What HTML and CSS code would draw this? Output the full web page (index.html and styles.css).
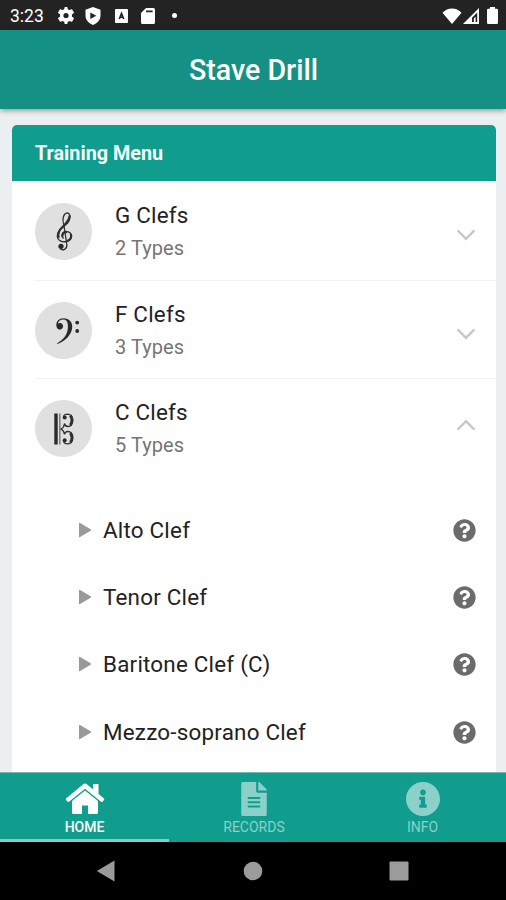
FILE: index.html
```
<!DOCTYPE html>
<html lang="en">
<head>
<meta charset="utf-8">
<title>Stave Drill</title>
<link rel="stylesheet" href="styles.css">
</head>
<body>
<svg class="defs" aria-hidden="true">
  <symbol id="help" viewBox="0 0 512 512"><path d="M504 256c0 136.997-111.043 248-248 248S8 392.997 8 256C8 119.083 119.043 8 256 8s248 111.083 248 248zM262.655 90c-54.497 0-89.255 22.957-116.549 63.758-3.536 5.286-2.353 12.415 2.715 16.258l34.699 26.31c5.205 3.947 12.621 3.008 16.665-2.122 17.864-22.658 30.113-35.797 57.303-35.797 20.429 0 45.698 13.148 45.698 32.958 0 14.976-12.363 22.667-32.534 33.976C247.128 238.528 216 254.941 216 296v4c0 6.627 5.373 12 12 12h56c6.627 0 12-5.373 12-12v-1.333c0-28.462 83.186-29.647 83.186-106.667 0-58.002-60.165-102-116.531-102zM256 338c-25.365 0-46 20.635-46 46 0 25.364 20.635 46 46 46s46-20.636 46-46c0-25.365-20.635-46-46-46z"/></symbol>
  <symbol id="play" viewBox="0 0 14 16"><path d="M1 1.6Q1 .4 2.1 1L12.6 7.2Q13.6 8 12.6 8.8L2.1 15Q1 15.6 1 14.4Z"/></symbol>
  <symbol id="chevron" viewBox="0 0 20 12"><path d="M1.6 1.4L10 9.8L18.4 1.4"/></symbol>
</svg>
<div class="status">
  <span class="clock">3:23</span>
  <svg class="st-gear" viewBox="0 0 24 24"><path fill-rule="evenodd" d="M19.6 13.3a8 8 0 0 0 0-2.6l2.7-2.1c.3-.2.3-.5.2-.8L20 3.400c-.2-.3-.5-.4-.8-.3L16 4.400a8 8 0 0 0-2.200-1.300L13.300.6c0-.3-.3-.6-.6-.6H9.900c-.4 0-.6.3-.7.6L8.800 3.100a8 8 0 0 0-2.200 1.300L3.400 3.100c-.3-.1-.6 0-.8.3L.1 7.800c-.2.3-.1.6.2.8L3 10.700a8 8 0 0 0 0 2.600L.3 15.400c-.3.2-.4.5-.2.8l2.500 4.400c.2.3.5.4.8.3l3.200-1.300a8 8 0 0 0 2.200 1.300l.4 2.500c.1.3.3.6.7.6h2.800c.3 0 .6-.3.6-.6l.5-2.500a8 8 0 0 0 2.200-1.300l3.200 1.300c.3.1.6 0 .8-.3l2.500-4.400c.1-.3.1-.6-.2-.8ZM11.300 8.300a3.700 3.700 0 1 1 0 7.400a3.700 3.700 0 0 1 0-7.400Z"/></svg>
  <svg class="st-shield" viewBox="0 0 16 18"><path fill-rule="evenodd" d="M8 0L15.500 2.800V8.500C15.500 13 12 16.500 8 18C4 16.500.5 13 .5 8.500V2.800ZM5.300 5.400V12L11.300 8.700Z"/></svg>
  <svg class="st-box" viewBox="0 0 13 14"><path d="M1 0H12Q13 0 13 1V13Q13 14 12 14H1Q0 14 0 13V1Q0 0 1 0Z"/><path class="dark" d="M4.300 10L6.500 4.500L8.700 10M5.400 8.300H7.600"/></svg>
  <svg class="st-card" viewBox="0 0 14 16"><path fill-rule="evenodd" d="M5 0H12.500Q14 0 14 1.500V14.500Q14 16 12.500 16H1.500Q0 16 0 14.500V5ZM5 2.500V4.300H11.600V2.500Z"/></svg>
  <span class="st-dot"></span>
  <span class="spacer"></span>
  <svg class="st-wifi" viewBox="0 0 20 16"><path d="M10 16L.5 4.800Q4.500 .5 10 .5T19.500 4.800Z"/></svg>
  <svg class="st-signal" viewBox="0 0 16 16"><path fill-rule="evenodd" d="M16 0V16H0ZM14.200 4.500L9 9.700V13.900H14.200Z"/><path d="M10.800 10.500L12.600 8.700V13.900H10.800Z"/></svg>
  <svg class="st-battery" viewBox="0 0 11 17"><path d="M3 0H8V1.800H9.800Q11 1.800 11 3V15.800Q11 17 9.800 17H1.200Q0 17 0 15.800V3Q0 1.800 1.200 1.800H3Z"/></svg>
</div>
<header class="appbar"><h1>Stave Drill</h1></header>
<main class="content">
  <section class="card">
    <h2 class="card-title">Training Menu</h2>
    <div class="group">
      <svg class="clef" viewBox="0 0 57 57"><circle cx="28.500" cy="28.500" r="28.500"/><path class="thin" d="M28.800 21.500C26.800 16 28.500 10.200 32.300 9.800C36 10.500 36 17.500 31 21.500C26 25.500 22.300 28.500 22.300 33C22.500 37.500 27 39.500 31.500 38.500C37.500 37 38 29.300 32 28.600C27.300 28.300 25.800 33 28.500 35.500"/><path class="thick" d="M34.700 12.500C34.500 16.500 31.500 20 28 23.500C23.500 27.500 22.200 31 23.800 34.800M35.700 31C37.200 34 35.500 37 32 38M27.600 33.500C26.500 30.500 29 28.800 32 29"/><path class="thin" d="M28.800 21.500L31.800 41.500C32.300 46.500 27.500 48 25 45.500"/><circle class="ink" cx="26" cy="43.300" r="2.600"/></svg>
      <div class="labels"><span class="name">G Clefs</span><span class="count">2 Types</span></div>
      <svg class="chevron"><use href="#chevron"/></svg>
    </div>
    <div class="group second">
      <svg class="clef" viewBox="0 0 57 57"><circle cx="28.500" cy="28.500" r="28.500"/><path class="ink" d="M21.500 24.500C20.500 19.500 24 16.300 28.700 16.300C34 16.300 37.400 19.800 37.200 25C37 33 30 39 22.500 42L22.200 41.300C28.500 37.500 32.500 33 32.900 25.500C33.200 20 31.500 17.400 28.300 17.400C25.500 17.400 23.300 19 22.900 21.500A3.300 3.300 0 1 1 21.500 24.500Z"/><circle class="ink" cx="42.200" cy="20.600" r="1.900"/><circle class="ink" cx="42.200" cy="29" r="1.900"/></svg>
      <div class="labels"><span class="name">F Clefs</span><span class="count">3 Types</span></div>
      <svg class="chevron"><use href="#chevron"/></svg>
    </div>
    <div class="group open">
      <svg class="clef" viewBox="0 0 57 57"><circle cx="28.500" cy="28.500" r="28.500"/><path class="ink" d="M19.300 13.500H22.700V44.500H19.300Z"/><path class="soft" d="M24 13.500H25.600V44.500H24Z"/><path class="thin" d="M28.500 17C28.500 14.800 30.500 14.100 33 14.100C39 14.500 39 26.500 33 26.500C30.500 26.500 29.800 25 29.500 23.500C29.200 26 28 28 26 29C28 30 29.200 31.500 29.500 34.500C29.800 32.500 30.500 31.500 33 31.500C39 31.500 39 43.500 33 43.900C30.500 43.900 28.500 43 28.500 40.500"/><path class="bowl" d="M35.300 15.500C37.600 18 37.600 22.500 35.300 25.200M35.300 32.900C37.600 35.500 37.600 39.800 35.300 42.500"/><circle class="ink" cx="29.700" cy="17.500" r="2"/><circle class="ink" cx="29.700" cy="40.300" r="2"/></svg>
      <div class="labels"><span class="name">C Clefs</span><span class="count">5 Types</span></div>
      <svg class="chevron up"><use href="#chevron"/></svg>
    </div>
    <ul class="items">
      <li><svg class="play"><use href="#play"/></svg><span>Alto Clef</span><svg class="help"><use href="#help"/></svg></li>
      <li><svg class="play"><use href="#play"/></svg><span>Tenor Clef</span><svg class="help"><use href="#help"/></svg></li>
      <li><svg class="play"><use href="#play"/></svg><span>Baritone Clef (C)</span><svg class="help"><use href="#help"/></svg></li>
      <li><svg class="play"><use href="#play"/></svg><span>Mezzo-soprano Clef</span><svg class="help"><use href="#help"/></svg></li>
    </ul>
  </section>
</main>
<nav class="tabs">
  <div class="tab active"><svg class="home" viewBox="0 0 40 34"><path d="M20 8.500L33 19V30.500Q33 32 31.500 32H23V23.500H17V32H8.500Q7 32 7 30.500V19Z"/><path d="M18.200 2.200Q20 .800 21.800 2.200L28 7.300V2H33.500V12L39 16.600Q39.500 17.200 39 17.900L37.300 19.700Q36.700 20.200 36 19.700L20 6.700L4 19.700Q3.300 20.200 2.700 19.700L1 17.900Q.5 17.200 1 16.600Z"/></svg><span>HOME</span></div>
  <div class="tab"><svg class="file" viewBox="0 0 384 512"><path d="M224 136V0H24C10.700 0 0 10.700 0 24v464c0 13.300 10.700 24 24 24h336c13.300 0 24-10.700 24-24V160H248c-13.200 0-24-10.800-24-24zm64 236c0 6.600-5.400 12-12 12H108c-6.600 0-12-5.400-12-12v-8c0-6.600 5.400-12 12-12h168c6.600 0 12 5.400 12 12v8zm0-64c0 6.600-5.400 12-12 12H108c-6.600 0-12-5.400-12-12v-8c0-6.600 5.400-12 12-12h168c6.600 0 12 5.400 12 12v8zm0-72v8c0 6.600-5.400 12-12 12H108c-6.600 0-12-5.400-12-12v-8c0-6.600 5.400-12 12-12h168c6.600 0 12 5.400 12 12zm96-114.100v6.100H256V0h6.100c6.400 0 12.500 2.500 17 7l97.900 98c4.500 4.500 7 10.600 7 16.900z"/></svg><span>RECORDS</span></div>
  <div class="tab"><svg class="info" viewBox="8 8 496 496"><path d="M256 8C119.043 8 8 119.083 8 256c0 136.997 111.043 248 248 248s248-111.003 248-248C504 119.083 392.957 8 256 8zm0 110c23.196 0 42 18.804 42 42s-18.804 42-42 42-42-18.804-42-42 18.804-42 42-42zm56 254c0 6.627-5.373 12-12 12h-88c-6.627 0-12-5.373-12-12v-24c0-6.627 5.373-12 12-12h12v-64h-12c-6.627 0-12-5.373-12-12v-24c0-6.627 5.373-12 12-12h64c6.627 0 12 5.373 12 12v100h12c6.627 0 12 5.373 12 12v24z"/></svg><span>INFO</span></div>
</nav>
<div class="sysnav">
  <svg viewBox="0 0 20 22"><path d="M18.500 .5V21.500L.8 11Z"/></svg>
  <svg viewBox="0 0 20 22"><circle cx="10" cy="11" r="9.300"/></svg>
  <svg viewBox="0 0 20 22"><rect x=".5" y="1.500" width="19" height="19" rx="1"/></svg>
</div>
</body>
</html>
```

FILE: styles.css
```
* { box-sizing: border-box; }
body {
  margin: 0;
  height: 900px;
  display: flex;
  flex-direction: column;
  overflow: hidden;
  background: #eceff1;
  font-family: Roboto, "Liberation Sans", sans-serif;
  white-space: nowrap;
}
svg { display: block; flex: none; }
.defs { position: absolute; width: 0; height: 0; }

.status {
  height: 30px;
  flex: none;
  display: flex;
  align-items: center;
  padding: 1px 8px 0 10px;
  background: #232323;
  color: #fff;
}
.status svg { fill: #fff; }
.clock { width: 48px; font-size: 17.5px; line-height: 28px; }
.st-gear { width: 17px; height: 17px; }
.st-shield { width: 16px; height: 18px; margin-left: 10px; }
.st-box { width: 13px; height: 14px; margin-left: 14px; }
.st-box .dark { fill: none; stroke: #232323; stroke-width: 1.6; }
.st-card { width: 14px; height: 16px; margin-left: 13px; }
.st-dot { width: 5px; height: 5px; border-radius: 50%; background: #fff; margin-left: 17px; }
.spacer { flex: 1; }
.st-wifi { width: 20px; height: 16px; }
.st-signal { width: 16px; height: 16px; margin: 0 8px 0 1px; }
.st-battery { width: 11px; height: 17px; }

.appbar {
  height: 79px;
  flex: none;
  display: flex;
  align-items: center;
  justify-content: center;
  z-index: 1;
  padding-left: 1px;
  background: #149184;
  color: #fff;
  box-shadow: 0 2px 5px rgba(0, 0, 0, .35);
}
h1 { margin: 0; font-size: 28.6px; font-weight: 500; line-height: 34px; }

.content { flex: 1; min-height: 0; overflow: hidden; padding: 16px 10px 0 12px; }
.card { background: #fff; border-radius: 5px 5px 0 0; overflow: hidden; height: 660px; }
.card-title {
  margin: 0;
  height: 56px;
  padding: 1px 0 0 23px;
  background: #109d8e;
  color: #f3fffc;
  font-size: 19.8px;
  line-height: 56px;
  font-weight: 700;
}
.group {
  height: 100px;
  margin-left: 23px;
  padding-right: 20px;
  display: flex;
  align-items: center;
  border-bottom: 1px solid #f1f2f3;
}
.group.second { height: 98px; }
.group.open { height: 99px; border-color: transparent; }
.clef { width: 57px; height: 57px; margin: 1px 23px 0 0; }
.clef circle { fill: #e0e0e0; }
.clef .ink { fill: #292929; }
.clef .soft { fill: #808080; }
.clef .thin { fill: none; stroke: #303030; stroke-width: 1.3; }
.clef .thick { fill: none; stroke: #303030; stroke-width: 2.3; }
.clef .bowl { fill: none; stroke: #303030; stroke-width: 3; }
.labels { flex: 1; display: flex; flex-direction: column; padding-top: 2px; }
.name { font-size: 22.4px; line-height: 33px; letter-spacing: .22px; color: #222; }
.count { font-size: 20px; line-height: 33px; letter-spacing: .05px; color: #757575; }
.chevron {
  width: 20px;
  height: 12px;
  margin-top: 9px;
  fill: none;
  stroke: #c7c7c7;
  stroke-width: 2.4;
}
.chevron.up { transform: scaleY(-1); margin-top: -6px; }

.items { list-style: none; margin: 0; padding: 18px 20px 0 66px; }
.items li { height: 67.3px; display: flex; align-items: center; }
.items span { flex: 1; font-size: 22.4px; line-height: 30px; letter-spacing: .22px; color: #222; }
.play { width: 14px; height: 16px; margin-right: 11px; fill: #999; }
.help { width: 23px; height: 23px; margin-top: 1px; fill: #6b6b6b; }

.tabs {
  height: 70px;
  flex: none;
  display: grid;
  grid-template-columns: 169px 170px 1fr;
  background: #109d8e;
  border-top: 1px solid #6fb9b1;
}
.tab {
  display: flex;
  flex-direction: column;
  align-items: center;
  justify-content: space-between;
  padding: 9px 0 4px;
  color: #8bd0c9;
  fill: #8bd0c9;
  border-bottom: 3px solid transparent;
}
.tab.active { color: #fff; fill: #fff; border-color: #8bc9c3; }
.tab span { font-size: 14px; line-height: 16px; }
.tab.active span { font-weight: 500; }
.home { width: 40px; height: 34px; }
.file { width: 26px; height: 34px; }
.info { width: 34px; height: 34px; }

.sysnav {
  height: 58px;
  flex: none;
  display: flex;
  justify-content: space-between;
  align-items: center;
  padding: 0 97px 0 96px;
  background: #000;
}
.sysnav svg { width: 20px; height: 22px; fill: #9b9b9b; }
```
